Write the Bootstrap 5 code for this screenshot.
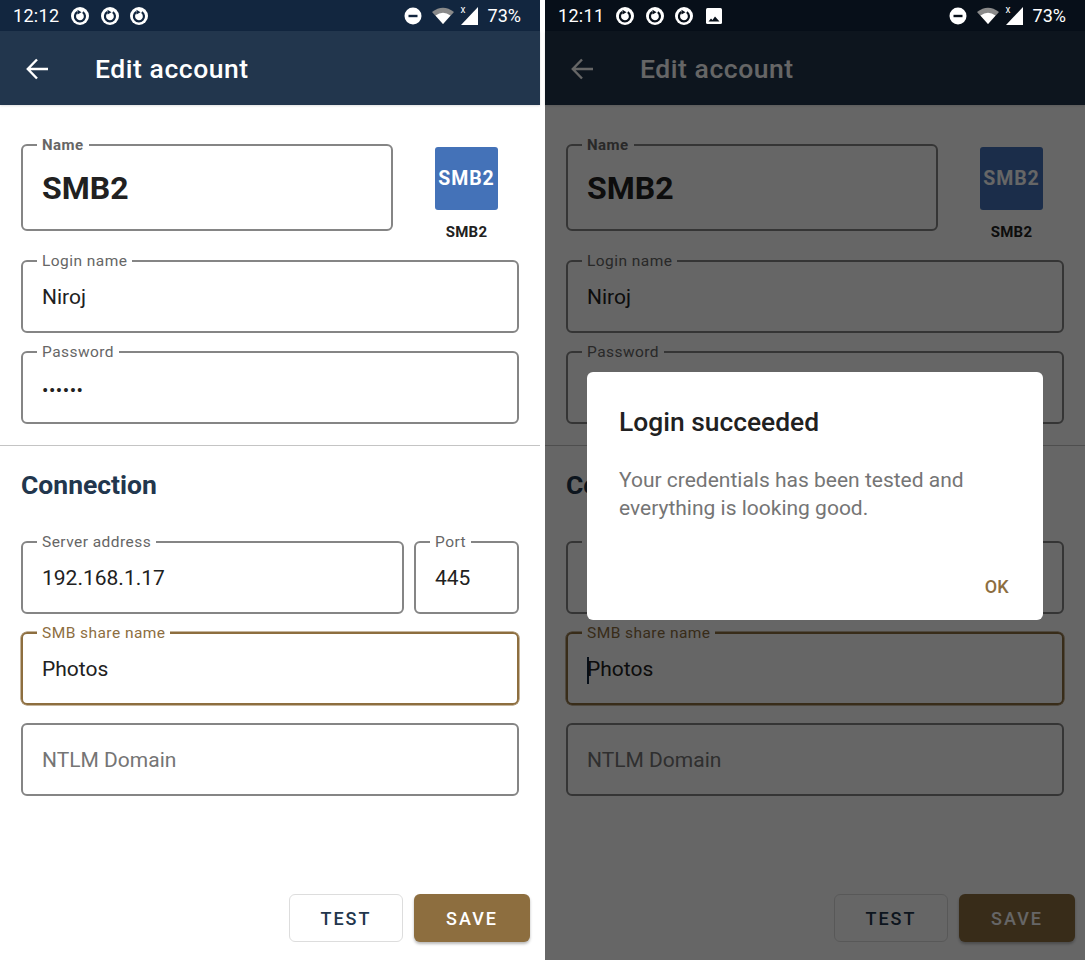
<!DOCTYPE html>
<html lang="en">
<head>
  <meta charset="UTF-8" />
  <meta name="viewport" content="width=device-width, initial-scale=1" />
  <title>Edit account</title>
  <link href="https://cdn.jsdelivr.net/npm/bootstrap@5.3.0/dist/css/bootstrap.min.css" rel="stylesheet" />
  <style>
    html, body { height: 100%; overflow: hidden; }
    body { background: #fff; font-family: Roboto, "Liberation Sans", sans-serif; color: #212121; }

    .phone { width: 540px; height: 960px; background: #fff; flex: none; }
    .shot-gap { width: 5px; flex: none; }

    .status-bar { height: 31px; background: #12263f; color: #fff; font-size: 18px; padding: 0 19px 0 13px; }
    .status-time { margin-right: 12px; letter-spacing: .3px; }
    .status-left { column-gap: 11.5px; }
    .status-ic { width: 18px; height: 18px; color: #12263f; }
    .status-wifi { margin-left: 10px; }
    .status-signal { width: 17px; height: 18px; margin-left: 7px; }
    .status-x { top: -3px; left: 0; font-size: 10px; line-height: 12px; }
    .status-pct { margin-left: 10px; }
    .phone-dim .status-bar { background: #070f19; }
    .phone-dim .status-ic { color: #070f19; }

    .app-bar { height: 74px; background: #22364d; color: #fff; padding: 2px 0 0 26px; box-shadow: 0 1px 2px rgba(0,0,0,.12); }
    .app-title { font-size: 26.5px; font-weight: 500; margin-left: 47px; letter-spacing: .55px; }

    .form-pane { padding: 39px 21px 0; }
    .outline-box { height: 73px; border: 2px solid #858585; border-radius: 6px; padding: 3px 0 0 19px; display: flex; align-items: center; font-size: 21px; position: relative; margin-bottom: 18px; }
    .outline-label { position: absolute; top: -11px; left: 14px; background: #fff; padding: 0 5px; font-size: 15.5px; line-height: 20px; color: #666; letter-spacing: .45px; }
    .name-row { margin-bottom: 19px; }
    .box-name { height: 87px; flex: 1; margin-bottom: 0; padding-top: 0; font-size: 32px; font-weight: 700; }
    .box-name .outline-label { font-weight: 700; font-size: 15px; }
    .box-hint { color: #757575; }
    .box-active { border-color: #8d6e3f; box-shadow: 0 0 0 .5px #8d6e3f; }
    .box-active .outline-label { color: #8d6e3f; }
    .box-port { width: 105px; flex: none; }
    .server-row { column-gap: 10px; }
    .pw-dots { font-size: 19px; letter-spacing: .5px; padding-top: 4px; }

    .acct-icon { width: 150px; margin-right: -24px; padding: 0 45px 0 42px; flex: none; text-align: center; }
    .acct-tile { width: 63px; height: 63px; margin-top: 3px; padding-top: 1px; background: #4472b8; color: #fff; border-radius: 3px; font-size: 19.5px; font-weight: 700; letter-spacing: .9px; }
    .acct-cap { font-size: 15px; font-weight: 700; margin-top: 13px; line-height: 18px; letter-spacing: .3px; }

    .sep { height: 1px; background: #c4c4c4; margin: 21px -21px 0; }
    .sec-title { font-size: 26.5px; font-weight: 700; color: #22364d; margin: 23px 0 40px; line-height: 32px; }

    .foot-btns { margin-top: auto; padding: 0 10px 18px 0; column-gap: 11px; }
    .act-btn { height: 48px; border-radius: 6px; font-size: 18px; font-weight: 500; letter-spacing: 2px; font-family: inherit; padding: 0; }
    .act-test { width: 114px; background: #fff; color: #22364d; border: 1px solid #ddd; }
    .act-save { width: 116px; background: #8d6e3f; color: #fff; border: 0; box-shadow: 0 2px 3px rgba(0,0,0,.28); }

    .dim-layer { top: 31px; left: 0; right: 0; bottom: 0; background: rgba(0,0,0,.6); }
    .login-dialog { top: 372px; left: 42px; width: 456px; height: 248px; background: #fff; border-radius: 6px; padding: 32px 32px 0; }
    .dlg-title { font-size: 26.4px; font-weight: 500; line-height: 36px; margin-bottom: 26px; }
    .dlg-text { font-size: 21px; line-height: 28px; color: #757575; }
    .dlg-ok { position: absolute; right: 34px; bottom: 21px; color: #8d6e3f; font-size: 18px; font-weight: 500; line-height: 24px; padding: 0; border: 0; letter-spacing: .3px; }
    .text-caret { display: inline-block; width: 2px; height: 27px; margin-right: -2px; background: #12263f; }
  </style>
</head>
<body>
  <svg width="0" height="0" class="position-absolute">
    <symbol id="ic-sync" viewBox="0 0 18 18">
      <circle cx="9" cy="9" r="9" fill="#fff" />
      <path d="M11.800 5.200a5 5 0 1 1-5.400-.2" fill="none" stroke="currentColor" stroke-width="2.200" />
      <path d="M6.500 2.800l4 2.400-4 2.400Z" fill="currentColor" />
    </symbol>
    <symbol id="ic-dnd" viewBox="0 0 18 18">
      <circle cx="9" cy="9" r="8.500" fill="#fff" />
      <rect x="4.500" y="7.800" width="9" height="2.400" fill="currentColor" />
    </symbol>
    <symbol id="ic-wifi" viewBox="0 0 22 17">
      <path d="M0 5Q11-3.500 22 5L11 17Z" fill="#8a8a8a" />
      <path d="M3.500 8.500Q11 3 18.500 8.500L11 17Z" fill="#fff" />
    </symbol>
    <symbol id="ic-signal" viewBox="0 0 17 18">
      <path d="M17 0V18H0Z" fill="#fff" />
    </symbol>
    <symbol id="ic-photo" viewBox="0 0 18 18">
      <rect x="1" y="1" width="16" height="16" rx="1.500" fill="#fff" />
      <path d="M3.500 14.500l2.500-3 1.500 1.500 2.500-3.500 4.500 5Z" fill="currentColor" />
    </symbol>
  </svg>

  <div class="d-flex">
    <!-- left shot -->
    <div class="phone d-flex flex-column">
      <div class="status-bar d-flex align-items-center">
        <span class="status-time">12:12</span>
        <div class="status-left d-flex me-auto">
          <svg class="status-ic"><use href="#ic-sync" /></svg>
          <svg class="status-ic"><use href="#ic-sync" /></svg>
          <svg class="status-ic"><use href="#ic-sync" /></svg>
        </div>
        <svg class="status-ic"><use href="#ic-dnd" /></svg>
        <svg width="22" height="17" class="status-wifi"><use href="#ic-wifi" /></svg>
        <div class="status-signal position-relative">
          <svg width="17" height="18" class="d-block"><use href="#ic-signal" /></svg>
          <span class="status-x position-absolute">x</span>
        </div>
        <span class="status-pct">73%</span>
      </div>
      <div class="app-bar d-flex align-items-center">
        <svg width="22" height="22" viewBox="0 0 22 22" fill="none" stroke="#fff" stroke-width="2.400"><path d="M22 11H2M11 1.500 1.800 11l9.200 9.500" /></svg>
        <span class="app-title">Edit account</span>
      </div>
      <div class="form-pane">
        <div class="name-row d-flex">
          <div class="outline-box box-name"><span class="outline-label">Name</span>SMB2</div>
          <div class="acct-icon">
            <div class="acct-tile d-flex align-items-center justify-content-center">SMB2</div>
            <div class="acct-cap">SMB2</div>
          </div>
        </div>
        <div class="outline-box"><span class="outline-label">Login name</span>Niroj</div>
        <div class="outline-box mb-0"><span class="outline-label">Password</span><span class="pw-dots">••••••</span></div>
        <div class="sep"></div>
        <div class="sec-title">Connection</div>
        <div class="server-row d-flex">
          <div class="outline-box flex-grow-1"><span class="outline-label">Server address</span>192.168.1.17</div>
          <div class="outline-box box-port"><span class="outline-label">Port</span>445</div>
        </div>
        <div class="outline-box box-active"><span class="outline-label">SMB share name</span>Photos</div>
        <div class="outline-box box-hint">NTLM Domain</div>
      </div>
      <div class="foot-btns d-flex justify-content-end">
        <button type="button" class="btn act-btn act-test">TEST</button>
        <button type="button" class="btn act-btn act-save">SAVE</button>
      </div>
    </div>

    <div class="shot-gap"></div>

    <!-- right shot, same form behind the dialog -->
    <div class="phone phone-dim d-flex flex-column position-relative">
      <div class="status-bar d-flex align-items-center">
        <span class="status-time">12:11</span>
        <div class="status-left d-flex me-auto">
          <svg class="status-ic"><use href="#ic-sync" /></svg>
          <svg class="status-ic"><use href="#ic-sync" /></svg>
          <svg class="status-ic"><use href="#ic-sync" /></svg>
          <svg class="status-ic"><use href="#ic-photo" /></svg>
        </div>
        <svg class="status-ic"><use href="#ic-dnd" /></svg>
        <svg width="22" height="17" class="status-wifi"><use href="#ic-wifi" /></svg>
        <div class="status-signal position-relative">
          <svg width="17" height="18" class="d-block"><use href="#ic-signal" /></svg>
          <span class="status-x position-absolute">x</span>
        </div>
        <span class="status-pct">73%</span>
      </div>
      <div class="app-bar d-flex align-items-center">
        <svg width="22" height="22" viewBox="0 0 22 22" fill="none" stroke="#fff" stroke-width="2.400"><path d="M22 11H2M11 1.500 1.800 11l9.200 9.500" /></svg>
        <span class="app-title">Edit account</span>
      </div>
      <div class="form-pane">
        <div class="name-row d-flex">
          <div class="outline-box box-name"><span class="outline-label">Name</span>SMB2</div>
          <div class="acct-icon">
            <div class="acct-tile d-flex align-items-center justify-content-center">SMB2</div>
            <div class="acct-cap">SMB2</div>
          </div>
        </div>
        <div class="outline-box"><span class="outline-label">Login name</span>Niroj</div>
        <div class="outline-box mb-0"><span class="outline-label">Password</span><span class="pw-dots">••••••</span></div>
        <div class="sep"></div>
        <div class="sec-title">Connection</div>
        <div class="server-row d-flex">
          <div class="outline-box flex-grow-1"><span class="outline-label">Server address</span>192.168.1.17</div>
          <div class="outline-box box-port"><span class="outline-label">Port</span>445</div>
        </div>
        <div class="outline-box box-active"><span class="outline-label">SMB share name</span><span class="text-caret"></span>Photos</div>
        <div class="outline-box box-hint">NTLM Domain</div>
      </div>
      <div class="foot-btns d-flex justify-content-end">
        <button type="button" class="btn act-btn act-test">TEST</button>
        <button type="button" class="btn act-btn act-save">SAVE</button>
      </div>

      <div class="dim-layer position-absolute"></div>
      <div class="login-dialog position-absolute">
        <div class="dlg-title">Login succeeded</div>
        <div class="dlg-text">Your credentials has been tested and everything is looking good.</div>
        <button type="button" class="btn dlg-ok">OK</button>
      </div>
    </div>
  </div>
</body>
</html>
